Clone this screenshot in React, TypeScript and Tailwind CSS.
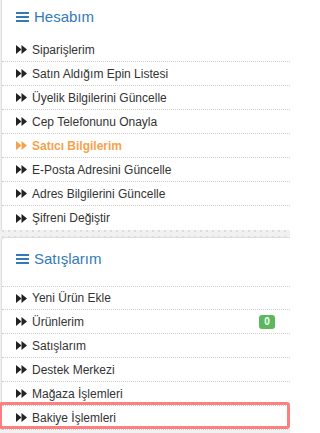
import React from "react";

const Fwd = ({ color = "#222" }: { color?: string }) => (
  <svg width="11" height="9" viewBox="0 0 11 9" className="shrink-0">
    <polygon points="0,0 5.5,4.5 0,9" fill={color} />
    <polygon points="5.5,0 11,4.5 5.5,9" fill={color} />
  </svg>
);

const Bars = () => (
  <svg width="13" height="10" viewBox="0 0 13 10" className="shrink-0">
    <rect x="0" y="0" width="13" height="2" fill="#337ab7" />
    <rect x="0" y="4" width="13" height="2" fill="#337ab7" />
    <rect x="0" y="8" width="13" height="2" fill="#337ab7" />
  </svg>
);

type Item = { label: string; active?: boolean; badge?: string; highlight?: boolean };

const Row = ({ item, last, topBorder }: { item: Item; last?: boolean; topBorder?: boolean }) => (
  <div
    className={
      "relative flex h-[24px] items-center gap-[5px] pl-[14px] pr-[15px] " +
      (last ? "" : "border-b border-dotted border-[#cfcfcf] ") +
      (topBorder ? "border-t border-dotted border-[#cfcfcf]" : "")
    }
  >
    <Fwd color={item.active ? "#f7a24b" : "#222"} />
    <span
      className={
        item.active ? "font-bold text-[#f7a24b]" : "text-[#333]"
      }
    >
      {item.label}
    </span>
    {item.badge && (
      <span className="ml-auto flex h-[14px] w-[16px] items-center justify-center rounded-[3px] bg-[#5cb85c] text-[10px] font-bold leading-none text-white">
        {item.badge}
      </span>
    )}
    {item.highlight && (
      <div className="pointer-events-none absolute -top-[4px] bottom-[0px] -left-[3px] right-[0px] rounded-[3px] border-[3px] border-[#ff7f7f]" />
    )}
  </div>
);

const hesap: Item[] = [
  { label: "Siparişlerim" },
  { label: "Satın Aldığım Epin Listesi" },
  { label: "Üyelik Bilgilerini Güncelle" },
  { label: "Cep Telefonunu Onayla" },
  { label: "Satıcı Bilgilerim", active: true },
  { label: "E-Posta Adresini Güncelle" },
  { label: "Adres Bilgilerini Güncelle" },
  { label: "Şifreni Değiştir" },
];

const satis: Item[] = [
  { label: "Yeni Ürün Ekle" },
  { label: "Ürünlerim", badge: "0" },
  { label: "Satışlarım" },
  { label: "Destek Merkezi" },
  { label: "Mağaza İşlemleri" },
  { label: "Bakiye İşlemleri", highlight: true },
];

export default function App() {
  return (
    <div className="h-[433px] w-[290px] overflow-hidden bg-[#f1f1f1] bg-[radial-gradient(#dcdcdc_1px,transparent_1px)] bg-[length:6px_6px] font-['Liberation_Sans',Arial,sans-serif] text-[12px]">
      <div className="ml-px border-l border-[#dddddd] bg-white">
        <div className="flex h-[38px] items-start gap-[5px] pl-[14px] pt-[8px]">
          <div className="flex h-[18px] items-center">
            <Bars />
          </div>
          <span className="text-[15px] leading-[18px] text-[#337ab7]">Hesabım</span>
        </div>
        {hesap.map((it, i) => (
          <Row key={it.label} item={it} last={i === hesap.length - 1} />
        ))}
      </div>
      <div className="h-[7px]" />
      <div className="ml-px rounded-tl-[4px] border-l border-t border-[#dddddd] bg-white">
        <div className="flex h-[48px] items-start gap-[5px] pl-[14px] pt-[12px]">
          <div className="flex h-[18px] items-center">
            <Bars />
          </div>
          <span className="text-[15px] leading-[18px] text-[#337ab7]">Satışlarım</span>
        </div>
        {satis.map((it, i) => (
          <Row key={it.label} item={it} topBorder={i === 0} />
        ))}
      </div>
    </div>
  );
}
